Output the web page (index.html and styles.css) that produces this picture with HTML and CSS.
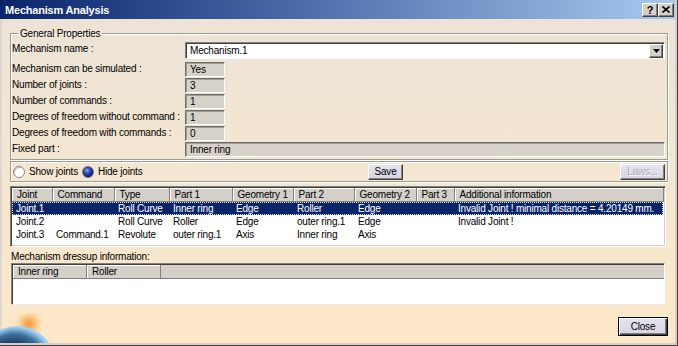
FILE: index.html
```html
<!DOCTYPE html>
<html>
<head>
<meta charset="utf-8">
<title>Mechanism Analysis</title>
<link rel="stylesheet" href="styles.css">
</head>
<body>
<div class="window">
  <div class="titlebar">
    <span class="title">Mechanism Analysis</span>
    <div class="tbtns">
      <span class="tbtn help">?</span>
      <span class="tbtn close"><svg width="8" height="7" viewBox="0 0 8 7"><path d="M0.5 0.5 L7.5 6.5 M7.5 0.5 L0.5 6.5" stroke="#000" stroke-width="1.6" fill="none"/></svg></span>
    </div>
  </div>
  <div class="body">
    <fieldset class="group">
      <legend>General Properties</legend>
      <div class="props">
        <div class="lbl first">Mechanism name :</div>
        <div class="combo"><span class="combo-text">Mechanism.1</span><span class="combo-btn"><svg width="7" height="5" viewBox="0 0 7 5"><path d="M0 0 H7 L3.5 4 Z" fill="#000"/></svg></span></div>
        <div class="lbl">Mechanism can be simulated :</div>
        <div class="val">Yes</div>
        <div class="lbl">Number of joints :</div>
        <div class="val">3</div>
        <div class="lbl">Number of commands :</div>
        <div class="val">1</div>
        <div class="lbl">Degrees of freedom without command :</div>
        <div class="val">1</div>
        <div class="lbl">Degrees of freedom with commands :</div>
        <div class="val">0</div>
        <div class="lbl">Fixed part :</div>
        <div class="val wide">Inner ring</div>
      </div>
    </fieldset>

    <div class="radiobar">
      <div class="radios">
        <span class="radio"></span><span class="rlabel">Show joints</span>
        <span class="radio on"></span><span class="rlabel">Hide joints</span>
      </div>
      <span class="btn save">Save</span>
      <span class="spacer"></span>
      <span class="btn disabled laws">Laws...</span>
    </div>

    <div class="list">
      <table class="grid">
        <colgroup>
          <col class="c1"><col class="c2"><col class="c3"><col class="c4"><col class="c5"><col class="c6"><col class="c7"><col class="c8"><col class="c9">
        </colgroup>
        <thead>
          <tr><th>Joint</th><th>Command</th><th>Type</th><th>Part 1</th><th>Geometry 1</th><th>Part 2</th><th>Geometry 2</th><th>Part 3</th><th>Additional information</th></tr>
        </thead>
        <tbody>
          <tr class="sel"><td>Joint.1</td><td></td><td>Roll Curve</td><td>Inner ring</td><td>Edge</td><td>Roller</td><td>Edge</td><td></td><td>Invalid Joint ! minimal distance = 4.20149 mm.</td></tr>
          <tr><td>Joint.2</td><td></td><td>Roll Curve</td><td>Roller</td><td>Edge</td><td>outer ring.1</td><td>Edge</td><td></td><td>Invalid Joint !</td></tr>
          <tr><td>Joint.3</td><td>Command.1</td><td>Revolute</td><td>outer ring.1</td><td>Axis</td><td>Inner ring</td><td>Axis</td><td></td><td></td></tr>
        </tbody>
      </table>
    </div>

    <div class="dress-label">Mechanism dressup information:</div>
    <div class="dress">
      <div class="dress-head">
        <span class="dh">Inner ring</span><span class="dh">Roller</span><span class="dh-fill"></span>
      </div>
    </div>

    <div class="footer">
      <span class="btn default">Close</span>
    </div>

    <svg class="globe" width="50" height="30" viewBox="0 0 50 30">
      <defs>
        <radialGradient id="sun" cx="29" cy="11" r="17" gradientUnits="userSpaceOnUse">
          <stop offset="0" stop-color="#f59838"/>
          <stop offset="0.3" stop-color="#f8b060" stop-opacity="0.9"/>
          <stop offset="0.65" stop-color="#fcd49c" stop-opacity="0.6"/>
          <stop offset="1" stop-color="#fde8c8" stop-opacity="0"/>
        </radialGradient>
        <radialGradient id="earth" cx="16" cy="52" r="38" fx="2" fy="62" gradientUnits="userSpaceOnUse">
          <stop offset="0" stop-color="#08121f"/>
          <stop offset="0.6" stop-color="#172c44"/>
          <stop offset="0.85" stop-color="#3b6f9c"/>
          <stop offset="1" stop-color="#a4d2f2"/>
        </radialGradient>
      </defs>
      <circle cx="29" cy="11" r="17" fill="url(#sun)"/>
      <circle cx="17" cy="52" r="39" fill="url(#earth)"/>
    </svg>
  </div>
</div>
</body>
</html>
```

FILE: styles.css
```css
* { box-sizing: border-box; }

body {
  margin: 0;
  width: 678px;
  height: 346px;
  overflow: hidden;
  background: #d4d0c8;
  font-family: "Liberation Sans", Arial, sans-serif;
  font-size: 10px;
  letter-spacing: -0.2px;
  color: #000;
}

.window {
  width: 678px;
  height: 346px;
  display: flex;
  flex-direction: column;
  background: #d4d0c8;
  border-right: 1px solid #404040;
  border-bottom: 1px solid #404040;
  padding: 0 2px 2px 0;
}

.titlebar {
  height: 19px;
  flex: none;
  display: flex;
  align-items: center;
  justify-content: space-between;
  padding: 0 1px 0 5px;
  background: linear-gradient(90deg, #0a246a 0%, #3c5c9c 35%, #a6caf0 100%);
  color: #fff;
}

.title {
  font-weight: bold;
  font-size: 11px;
  letter-spacing: -0.2px;
}

.tbtns { display: flex; }

.tbtn {
  width: 16px;
  height: 14px;
  display: flex;
  align-items: center;
  justify-content: center;
  background: #d4d0c8;
  border: 1px solid;
  border-color: #fff #404040 #404040 #fff;
  box-shadow: inset -1px -1px #808080;
  color: #000;
  font-weight: bold;
  font-size: 11px;
  letter-spacing: 0;
}

.body {
  flex: 1;
  position: relative;
  display: flex;
  flex-direction: column;
  padding: 8px 7px 0 8px;
  border-left: 2px solid #dcd7cf;
  background: linear-gradient(#ece3d6 0%, #f3e6d2 40%, #fde8c8 100%);
}

.group {
  margin: 0;
  padding: 2px 2px 1px 1px;
  border: 1px solid #9c9a94;
  box-shadow: inset 1px 1px #fff, 1px 1px #fff;
}

.group legend {
  padding: 0 2px;
  margin-left: 6px;
  line-height: 13px;
}

.props {
  display: grid;
  grid-template-columns: 173px 1fr;
  grid-template-rows: 20px;
  grid-auto-rows: 16px;
}

.lbl {
  line-height: 13px;
  white-space: nowrap;
}

.combo {
  height: 17px;
  display: flex;
  align-items: stretch;
  background: #fff;
  border: 1px solid;
  border-color: #808080 #fff #fff #808080;
  box-shadow: inset 1px 1px #404040;
  padding: 1px 1px 0 1px;
}

.combo-text {
  flex: 1;
  padding-left: 3px;
  line-height: 14px;
}

.combo-btn {
  width: 14px;
  height: 14px;
  display: flex;
  align-items: center;
  justify-content: center;
  background: #d4d0c8;
  border: 1px solid;
  border-color: #fff #404040 #404040 #fff;
  box-shadow: inset -1px -1px #808080;
}

.val {
  width: 40px;
  height: 15px;
  line-height: 13px;
  padding-left: 4px;
  background: #d6d2ca;
  border: 1px solid;
  border-color: #6e6c68 #fff #fff #6e6c68;
  box-shadow: inset 1px 1px #a09e98;
}

.val.wide { width: auto; }

.radiobar {
  margin-top: 1px;
  height: 21px;
  display: flex;
  align-items: center;
  padding: 0 1px;
  border: 1px solid #9c9a94;
  box-shadow: inset 1px 1px #fff, 1px 1px #fff;
}

.radios {
  width: 356px;
  display: flex;
  align-items: center;
}

.radio {
  width: 12px;
  height: 12px;
  border-radius: 50%;
  background: #fff;
  border: 1px solid #8a8a8a;
  box-shadow: inset 1px 1px #c8c8c8;
  margin-left: 1px;
}

.radio.on {
  margin-left: 4px;
  border-color: #707070;
  background: radial-gradient(circle at 40% 35%, #8aa8f0 0%, #2a4ab8 35%, #0a1e78 70%, #041050 100%);
  box-shadow: none;
}

.rlabel {
  margin-left: 4px;
  line-height: 13px;
}

.btn {
  display: flex;
  align-items: center;
  justify-content: center;
  height: 16px;
  background: linear-gradient(#e4e3ee, #d6d5e2);
  border: 1px solid;
  border-color: #fff #404040 #404040 #fff;
  box-shadow: inset -1px -1px #808080;
}

.save { width: 35px; }

.spacer { flex: 1; }

.laws {
  width: 45px;
  margin-right: 1px;
}

.disabled {
  color: #a8a8b0;
  text-shadow: 1px 1px #fff;
}

.list {
  margin-top: 4px;
  margin-right: 2px;
  height: 61px;
  background: #fff;
  border: 1px solid;
  border-color: #808080 #fff #fff #808080;
  box-shadow: inset 1px 1px #404040, inset -1px -1px #d4d0c8;
  padding: 1px;
  overflow: hidden;
}

.grid {
  border-collapse: collapse;
  table-layout: fixed;
  width: 651px;
}

.c1 { width: 40px; }
.c2 { width: 62px; }
.c3 { width: 55px; }
.c4 { width: 63px; }
.c5 { width: 61px; }
.c6 { width: 61px; }
.c7 { width: 62px; }
.c8 { width: 38px; }
.c9 { width: 209px; }

.grid th, .grid td {
  height: 13px;
  line-height: 13px;
  white-space: nowrap;
  overflow: hidden;
  text-align: left;
  font-weight: normal;
}

.grid td { padding: 0 0 0 4px; }

.grid th {
  background: #d4d0c8;
  border-right: 1px solid #808080;
  border-bottom: 1px solid #808080;
  box-shadow: inset 1px 1px #fff;
  padding: 0 0 0 5px;
}

.grid tr.sel td {
  background: #0a246a;
  color: #fff;
}

.grid tr.sel { outline: 1px dotted #e8e8c0; outline-offset: -1px; }

.dress-label {
  margin-top: 3px;
  line-height: 13px;
  padding-left: 1px;
}

.dress {
  margin: 0 3px 0 1px;
  height: 42px;
  background: #fff;
  border: 1px solid;
  border-color: #808080 #fff #eee #808080;
  box-shadow: inset 1px 1px #404040;
  padding: 1px 0 0 1px;
}

.dress-head {
  display: flex;
  height: 14px;
  background: #d4d0c8;
  border-bottom: 1px solid #808080;
}

.dh {
  width: 74px;
  padding-left: 5px;
  line-height: 13px;
  border-right: 1px solid #808080;
  box-shadow: inset 1px 1px #fff;
}

.dh-fill { flex: 1; }

.footer {
  margin-top: 12px;
  display: flex;
  justify-content: flex-end;
}

.default {
  width: 50px;
  height: 19px;
  border: 1px solid #000;
  box-shadow: inset 1px 1px #fff, inset -1px -1px #404040, inset -2px -2px #808080;
}

.globe {
  position: absolute;
  left: -2px;
  bottom: 0;
}
```
